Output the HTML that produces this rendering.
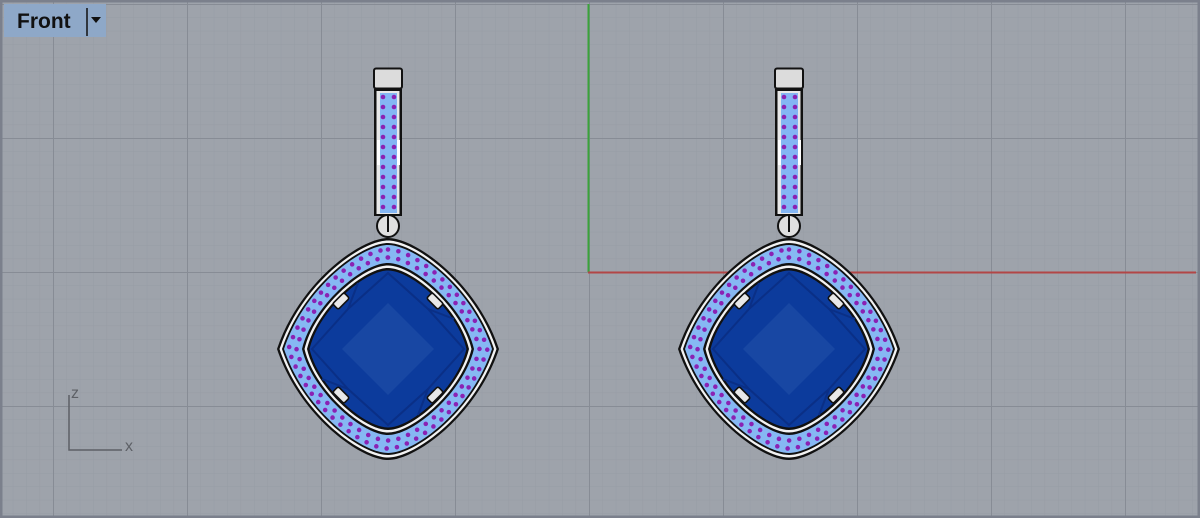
<!DOCTYPE html>
<html><head><meta charset="utf-8"><style>
html,body{margin:0;padding:0;width:1200px;height:518px;overflow:hidden;background:#9ea3ab}
svg{display:block}
</style></head><body>
<svg width="1200" height="518" viewBox="0 0 1200 518" xmlns="http://www.w3.org/2000/svg" font-family="Liberation Sans, sans-serif">
<defs>
<pattern id="mn" x="12.8" y="4" width="13.4" height="13.4" patternUnits="userSpaceOnUse">
<path d="M0 0V13.4M0 0H13.4" stroke="#979ca5" stroke-width="1" fill="none"/>
</pattern>
<pattern id="mj" x="53" y="4" width="134" height="134" patternUnits="userSpaceOnUse">
<path d="M0.5 0V134M0 0.5H134" stroke="#878c95" stroke-width="1" fill="none"/>
</pattern>
<path id="po" d="M0,-100 C25,-100 80,-60 100,0 C80,60 25,100 0,100 C-25,100 -80,60 -100,0 C-80,-60 -25,-100 0,-100Z"/>
<path id="pi" d="M0,-100 C30,-100 88,-50 100,0 C88,50 30,100 0,100 C-30,100 -88,50 -100,0 C-88,-50 -30,-100 0,-100Z"/>
<g id="ear">
 <rect x="374" y="89" width="28" height="127" fill="#111"/>
 <rect x="376.5" y="91" width="23" height="123" fill="#e8e8e8"/>
 <rect x="380" y="93" width="17" height="120" fill="#84b6f4"/>
 <rect x="377" y="140" width="3" height="25" fill="#fff"/>
 <rect x="397" y="140" width="3" height="25" fill="#fff"/>
 <g fill="#8a22b4">
  <circle cx="383" cy="97" r="2.3"/><circle cx="394" cy="97" r="2.3"/>
  <circle cx="383" cy="107" r="2.3"/><circle cx="394" cy="107" r="2.3"/>
  <circle cx="383" cy="117" r="2.3"/><circle cx="394" cy="117" r="2.3"/>
  <circle cx="383" cy="127" r="2.3"/><circle cx="394" cy="127" r="2.3"/>
  <circle cx="383" cy="137" r="2.3"/><circle cx="394" cy="137" r="2.3"/>
  <circle cx="383" cy="147" r="2.3"/><circle cx="394" cy="147" r="2.3"/>
  <circle cx="383" cy="157" r="2.3"/><circle cx="394" cy="157" r="2.3"/>
  <circle cx="383" cy="167" r="2.3"/><circle cx="394" cy="167" r="2.3"/>
  <circle cx="383" cy="177" r="2.3"/><circle cx="394" cy="177" r="2.3"/>
  <circle cx="383" cy="187" r="2.3"/><circle cx="394" cy="187" r="2.3"/>
  <circle cx="383" cy="197" r="2.3"/><circle cx="394" cy="197" r="2.3"/>
  <circle cx="383" cy="207" r="2.3"/><circle cx="394" cy="207" r="2.3"/>
 </g>
 <rect x="374" y="68.5" width="28" height="20" rx="2" fill="#dcdcdc" stroke="#111" stroke-width="2"/>
 <circle cx="388" cy="226" r="11" fill="#e0e0e0" stroke="#111" stroke-width="2"/>
 <line x1="388" y1="215" x2="388" y2="232" stroke="#111" stroke-width="2"/>
 <g transform="translate(388,349)">
  <use href="#po" transform="scale(1.11)" fill="#111"/>
  <use href="#po" transform="scale(1.085)" fill="#f2f2f2"/>
  <use href="#po" transform="scale(1.06)" fill="#111"/>
  <use href="#po" transform="scale(1.04)" fill="#86b8f3"/>
  <use href="#po" transform="scale(0.995)" fill="none" stroke="#8a22b4" stroke-width="4.6" stroke-linecap="round" stroke-dasharray="0 10.6"/>
  <use href="#pi" transform="scale(0.915)" fill="none" stroke="#8a22b4" stroke-width="5" stroke-linecap="round" stroke-dasharray="0 11.4"/>
  <use href="#pi" transform="scale(0.86)" fill="#111"/>
  <use href="#pi" transform="scale(0.835)" fill="#f2f2f2"/>
  <use href="#pi" transform="scale(0.81)" fill="#111"/>
  <use href="#pi" transform="scale(0.785)" fill="#0c3b9c"/>
  <g stroke="#0a2f86" stroke-width="2" fill="none">
   <path d="M-40,-40 L-76,0 L-40,40 L0,76 L40,40 L76,0 L40,-40 L0,-76Z"/>
   <path d="M-40,-40 L-30,-66 M40,-40 L66,-30 M40,40 L30,66 M-40,40 L-66,30"/>
  </g>
  <path d="M0,-46 L46,0 L0,46 L-46,0Z" fill="#2150a8" opacity="0.6"/>
  <g fill="#e8e8e8" stroke="#111" stroke-width="1.6">
   <rect x="-8" y="-4" width="16" height="8" rx="2" transform="translate(-47,-48) rotate(-45)"/>
   <rect x="-8" y="-4" width="16" height="8" rx="2" transform="translate(47,-48) rotate(45)"/>
   <rect x="-8" y="-4" width="16" height="8" rx="2" transform="translate(-47,46) rotate(45)"/>
   <rect x="-8" y="-4" width="16" height="8" rx="2" transform="translate(47,46) rotate(-45)"/>
  </g>
 </g>
</g>
</defs>
<rect width="1200" height="518" fill="#9ea3ab"/>
<rect width="1200" height="518" fill="url(#mn)"/>
<rect width="1200" height="518" fill="url(#mj)"/>
<line x1="588.5" y1="4" x2="588.5" y2="272" stroke="#3aa33a" stroke-width="2"/>
<line x1="588" y1="272.5" x2="1196" y2="272.5" stroke="#b24646" stroke-width="2"/>
<use href="#ear"/>
<use href="#ear" transform="translate(401,0)"/>
<path d="M69 395V450H122" stroke="#5d6066" stroke-width="1.5" fill="none"/>
<text x="71" y="398" font-size="16" fill="#5d6066">z</text>
<text x="125" y="451" font-size="16" fill="#5d6066">x</text>
<rect x="4" y="4" width="102" height="33" fill="#8ea8c8"/>
<text x="17" y="28" font-size="21" font-weight="bold" fill="#111">Front</text>
<line x1="87" y1="8" x2="87" y2="36" stroke="#111" stroke-width="1.5"/>
<path d="M91 17H101L96 23Z" fill="#111"/>
<rect x="1" y="1" width="1198" height="516" fill="none" stroke="#7b808c" stroke-width="3"/>
</svg>
</body></html>
